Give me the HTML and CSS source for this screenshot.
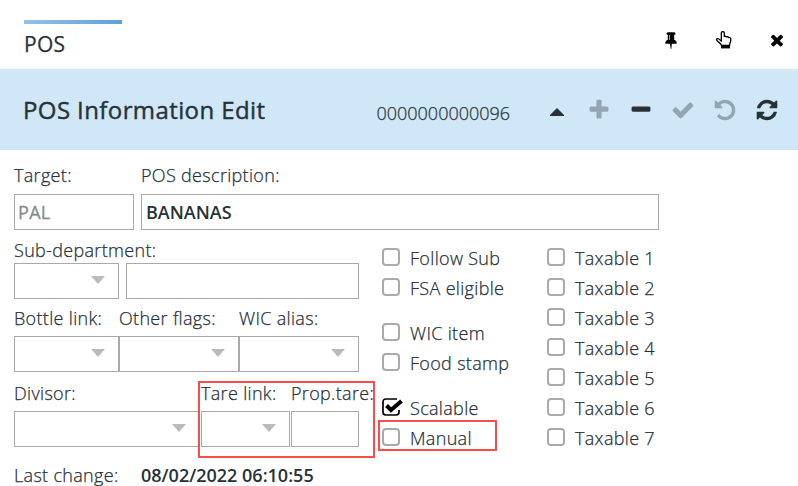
FILE: index.html
```html
<!DOCTYPE html>
<html lang="en">
<head>
<meta charset="utf-8">
<title>POS Information Edit</title>
<link rel="stylesheet" href="styles.css">
</head>
<body>
<header class="tabs">
  <div class="tab">POS</div>
  <div class="window-tools">
    <svg class="tool" viewBox="0 0 1792 1792"><path d="M800 864v-448q0-14-9-23t-23-9-23 9-9 23v448q0 14 9 23t23 9 23-9 9-23zm672 352q0 26-19 45t-45 19h-429l-51 483q-2 12-10.5 20.5t-20.5 8.5h-1q-27 0-32-27l-76-485h-404q-26 0-45-19t-19-45q0-123 78.5-221.5t177.5-98.5v-512q-52 0-90-38t-38-90 38-90 90-38h640q52 0 90 38t38 90-38 90-90 38v512q99 0 177.5 98.5t78.5 221.5z"/></svg>
    <svg class="tool" viewBox="0 0 18 18"><path d="M6.300 10.200V2.200q0-1.600 1.500-1.600t1.500 1.600v3.200q1.300-.5 2.100.5 1.500-.5 2.200.6 2.200-.2 2.200 1.900 0 2-.8 3.600-.4.900-.4 2.500H6.600q-.6-1.800-2.300-2.900-1.500-1-2.500-2.200-.8-1.300.5-1.800 1.400-.5 4 2.600z" fill="none" stroke="#000" stroke-width="1.300" stroke-linejoin="round"/><path d="M6 14h9v3.400H6z"/></svg>
    <svg class="tool" viewBox="0 0 1792 1792"><path d="M1490 1322q0 40-28 68l-136 136q-28 28-68 28t-68-28l-294-294-294 294q-28 28-68 28t-68-28l-136-136q-28-28-28-68t28-68l294-294-294-294q-28-28-28-68t28-68l136-136q28-28 68-28t68 28l294 294 294-294q28-28 68-28t68 28l136 136q28 28 28 68t-28 68l-294 294 294 294q28 28 28 68z"/></svg>
  </div>
</header>

<section class="titlebar">
  <h1>POS Information Edit</h1>
  <span class="code">0000000000096</span>
  <svg class="up" viewBox="0 0 14 8"><path d="M7 0l7 7v1H0V7z"/></svg>
  <div class="actions">
    <svg class="action off" viewBox="0 0 1792 1792"><path d="M1600 736v192q0 40-28 68t-68 28h-416v416q0 40-28 68t-68 28h-192q-40 0-68-28t-28-68v-416h-416q-40 0-68-28t-28-68v-192q0-40 28-68t68-28h416v-416q0-40 28-68t68-28h192q40 0 68 28t28 68v416h416q40 0 68 28t28 68z"/></svg>
    <svg class="action" viewBox="0 0 1792 1792"><path d="M1600 736v192q0 40-28 68t-68 28h-1216q-40 0-68-28t-28-68v-192q0-40 28-68t68-28h1216q40 0 68 28t28 68z"/></svg>
    <svg class="action off" viewBox="0 0 1792 1792"><path d="M1671 566q0 40-28 68l-724 724-136 136q-28 28-68 28t-68-28l-136-136-362-362q-28-28-28-68t28-68l136-136q28-28 68-28t68 28l294 295 656-657q28-28 68-28t68 28l136 136q28 28 28 68z"/></svg>
    <svg class="action off" viewBox="0 0 1792 1792"><path d="M1664 896q0 156-61 298t-164 245-245 164-298 61q-172 0-327-72.500t-264-204.500q-7-10-6.500-22.500t8.500-20.500l137-138q10-9 25-9 16 2 23 12 73 95 179 147t225 52q104 0 198.500-40.500t163.500-109.500 109.500-163.500 40.500-198.500-40.500-198.500-109.500-163.500-163.500-109.500-198.500-40.500q-98 0-188 35.500t-160 101.500l137 138q31 30 14 69-17 40-59 40h-448q-26 0-45-19t-19-45v-448q0-42 40-59 39-17 69 14l130 129q107-101 244.500-156.500t284.500-55.500q156 0 298 61t245 164 164 245 61 298z"/></svg>
    <svg class="action" viewBox="0 0 1792 1792"><path d="M1639 1056q0 5-1 7-64 268-268 434.500t-478 166.500q-146 0-282.500-55t-243.500-157l-129 129q-19 19-45 19t-45-19-19-45v-448q0-26 19-45t45-19h448q26 0 45 19t19 45-19 45l-137 137q71 66 161 102t187 36q134 0 250-65t186-179q11-17 53-117 8-23 30-23h192q13 0 22.500 9.500t9.500 22.500zm25-800v448q0 26-19 45t-45 19h-448q-26 0-45-19t-19-45 19-45l138-138q-148-137-349-137-134 0-250 65t-186 179q-11 17-53 117-8 23-30 23h-199q-13 0-22.500-9.500t-9.500-22.500v-7q65-268 270-434.500t480-166.500q146 0 284 55.500t245 156.500l130-129q19-19 45-19t45 19 19 45z"/></svg>
  </div>
</section>

<main class="form">
  <div class="row head">
    <div class="field target"><label>Target:</label><div class="input muted">PAL</div></div>
    <div class="field desc"><label>POS description:</label><div class="input">BANANAS</div></div>
  </div>
  <div class="columns">
    <div class="left">
      <div class="field sub"><label>Sub-department:</label>
        <div class="row pair"><div class="input select"></div><div class="input"></div></div>
      </div>
      <div class="row trio">
        <div class="field"><label>Bottle link:</label><div class="input select"></div></div>
        <div class="field"><label>Other flags:</label><div class="input select"></div></div>
        <div class="field"><label>WIC alias:</label><div class="input select"></div></div>
      </div>
      <div class="row tare">
        <div class="field"><label>Divisor:</label><div class="input select"></div></div>
        <div class="field"><label>Tare link:</label><div class="input select"></div></div>
        <div class="field"><label>Prop.tare:</label><div class="input"></div></div>
        <div class="mark mark-tare"></div>
      </div>
      <div class="row last"><label>Last change:</label><strong>08/02/2022 06:10:55</strong></div>
    </div>
    <div class="checks flags">
      <div class="check"><i class="box"></i>Follow Sub</div>
      <div class="check"><i class="box"></i>FSA eligible</div>
      <div class="check spaced"><i class="box"></i>WIC item</div>
      <div class="check"><i class="box"></i>Food stamp</div>
      <div class="check spaced"><svg class="ticked" viewBox="0 0 22 18"><path d="M15 1H4Q1 1 1 4v10q0 3 3 3h10q3 0 3-3v-2" fill="none" stroke="#000" stroke-width="1.700"/><path d="M4.500 7.500l4.500 4.500L19.500 3" fill="none" stroke="#000" stroke-width="4"/></svg>Scalable</div>
      <div class="check"><i class="box"></i>Manual<div class="mark mark-manual"></div></div>
    </div>
    <div class="checks">
      <div class="check"><i class="box"></i>Taxable 1</div>
      <div class="check"><i class="box"></i>Taxable 2</div>
      <div class="check"><i class="box"></i>Taxable 3</div>
      <div class="check"><i class="box"></i>Taxable 4</div>
      <div class="check"><i class="box"></i>Taxable 5</div>
      <div class="check"><i class="box"></i>Taxable 6</div>
      <div class="check"><i class="box"></i>Taxable 7</div>
    </div>
  </div>
</main>
</body>
</html>
```

FILE: styles.css
```css
* { box-sizing: border-box; }

body {
  margin: 0;
  height: 486px;
  overflow: hidden;
  background: #fff;
  color: #263238;
  font: 300 18px/24px "Open Sans", sans-serif;
  letter-spacing: 0.32px;
  -webkit-text-stroke: 0.25px;
}

svg { display: block; flex: none; }

.tabs {
  height: 69px;
  padding: 20px 12.5px 0 24px;
  display: flex;
  justify-content: space-between;
}

.tab {
  width: 98px;
  padding-top: 7px;
  font-size: 21px;
  line-height: 27px;
  font-weight: 400;
  height: 40px;
  letter-spacing: 0.3px;
  border-top: 4px solid;
  border-image: linear-gradient(90deg, #93c1e8, #5f9fd9) 1;
}

.window-tools { display: flex; gap: 35px; padding-top: 11px; }
.tool { width: 18px; height: 18px; }

.titlebar {
  height: 81px;
  display: flex;
  align-items: center;
  padding: 0 19.5px 0 23px;
  background: #d0e7f7;
}

h1 {
  width: 353px;
  margin: 0;
  font-size: 24px;
  line-height: 34px;
  font-weight: 400;
  letter-spacing: 0.4px;
  -webkit-text-stroke: 0.4px;
}

.code { width: 173.5px; padding: 6px 0 0 0.5px; letter-spacing: 0; }
.up { width: 14px; height: 8px; margin-top: 4px; fill: #263238; }
.actions { display: flex; gap: 18px; margin-left: auto; padding-top: 1px; }
.action { width: 24px; height: 24px; fill: #263238; }
.off { fill: #92a5b1; }

.form { padding: 13px 14px 0; }
.row { display: flex; }
label { display: block; white-space: nowrap; }

.input {
  height: 36px;
  border: 1px solid #aaa;
  padding: 5px 4px;
  font-weight: 600;
  letter-spacing: 0;
  -webkit-text-stroke: 0;
}

.muted {
  padding-left: 3px;
  color: #858b8e;
  font-weight: 400;
  letter-spacing: 0.3px;
  -webkit-text-stroke: 0.3px;
}

.select {
  display: flex;
  align-items: center;
  justify-content: flex-end;
  padding: 0 13px 2px 0;
}

.select::after {
  content: "";
  border: 7px solid transparent;
  border-top: 8px solid #bbb;
  border-bottom: 0;
}

.head { gap: 7px; }
.head label { margin-bottom: 7px; }
.target { width: 120px; }
.desc { width: 518px; }

.columns { display: flex; margin-top: 8px; }
.left { width: 368px; }
.sub label { margin-bottom: 1px; }
.pair { gap: 7px; }
.pair .input:first-child { width: 105px; }
.pair .input:last-child { width: 233px; }

.trio { margin-top: 7px; }
.trio label, .tare label { margin-bottom: 6px; }
.trio .field { width: 120px; }
.trio .field:first-child { width: 105px; }

.tare { margin-top: 9px; position: relative; }
.tare .field:nth-child(1) { width: 186px; margin-right: 1px; }
.tare .field:nth-child(2) { width: 89px; margin-right: 1px; }
.tare .field:nth-child(3) { width: 68px; }

.last { margin-top: 16px; }
.last label { width: 127px; }
.last strong { font-weight: 600; letter-spacing: 0; -webkit-text-stroke: 0; }

.checks { padding-top: 8px; }
.flags { width: 165px; }

.check {
  position: relative;
  display: flex;
  gap: 10px;
  height: 24px;
  margin-bottom: 6px;
}

.spaced { margin-top: 21px; }

.box {
  width: 18px;
  height: 18px;
  margin-top: 2px;
  border: 2px solid #aaa;
  border-radius: 4px;
}

.ticked { width: 22px; height: 18px; margin: 2px -4px 0 0; }

.mark { position: absolute; border: 2px solid #f94c4c; }
.mark-tare { left: 184px; top: 0; width: 177px; height: 77px; }
.mark-manual { left: -4px; top: -6px; width: 119px; height: 31px; }
```
